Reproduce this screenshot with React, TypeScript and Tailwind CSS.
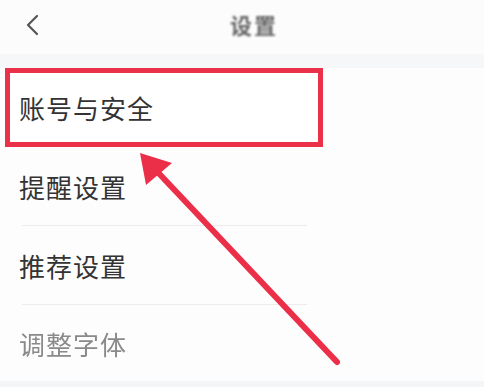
import React from 'react';

const items = ['提醒设置', '推荐设置'];

const App: React.FC = () => {
  return (
    <div
      className="relative w-[484px] h-[387px] overflow-hidden bg-[#fdfdfd] text-[#333]"
      style={{ fontFamily: '"Noto Sans CJK SC", "Noto Sans", sans-serif' }}
    >
      {/* header */}
      <div className="h-[54px] flex items-center pb-[5px] bg-[#fcfcfc]">
        <div className="w-[60px] flex justify-center pl-[4px]">
          <svg width="18" height="24" viewBox="0 0 18 24" fill="none">
            <path d="M14 3 L5 12 L14 21" stroke="#555" strokeWidth="2.2" strokeLinecap="round" strokeLinejoin="round" />
          </svg>
        </div>
        <div className="flex-1 flex justify-center pr-[36px]">
          <span className="text-[22px] font-bold text-[#666] blur-[1px] tracking-[2px]">设置</span>
        </div>
      </div>
      <div className="h-[14px] bg-[#f6f7f8]" />

      {/* list */}
      <div className="flex flex-col">
        <div className="ml-[5px] w-[318px] h-[79px] border-[5px] border-solid border-[#eb3049] flex items-center bg-white">
          <span className="ml-[9px] text-[26px] tracking-[1px]">账号与安全</span>
        </div>
        {items.map((t) => (
          <div key={t} className="flex flex-col">
            <div className="h-[78px] flex items-center pl-[19px]">
              <span className="text-[26px] tracking-[1px]">{t}</span>
            </div>
            <div className="ml-[22px] w-[285px] h-px bg-[#ececec]" />
          </div>
        ))}
        <div className="h-[76px] flex items-center pl-[19px]">
          <span className="text-[26px] tracking-[1px] text-[#8a8a8a] blur-[0.5px]">调整字体</span>
        </div>
        <div className="h-[10px] bg-[#f4f5f7]" />
      </div>

      {/* arrow */}
      <svg className="absolute left-0 top-0" width="484" height="387" viewBox="0 0 484 387">
        <line x1="337" y1="362" x2="150" y2="164" stroke="#ec2f48" strokeWidth="6" strokeLinecap="round" />
        <polygon points="140,153 146,185 172,163" fill="#ec2f48" />
      </svg>
    </div>
  );
};

export default App;
